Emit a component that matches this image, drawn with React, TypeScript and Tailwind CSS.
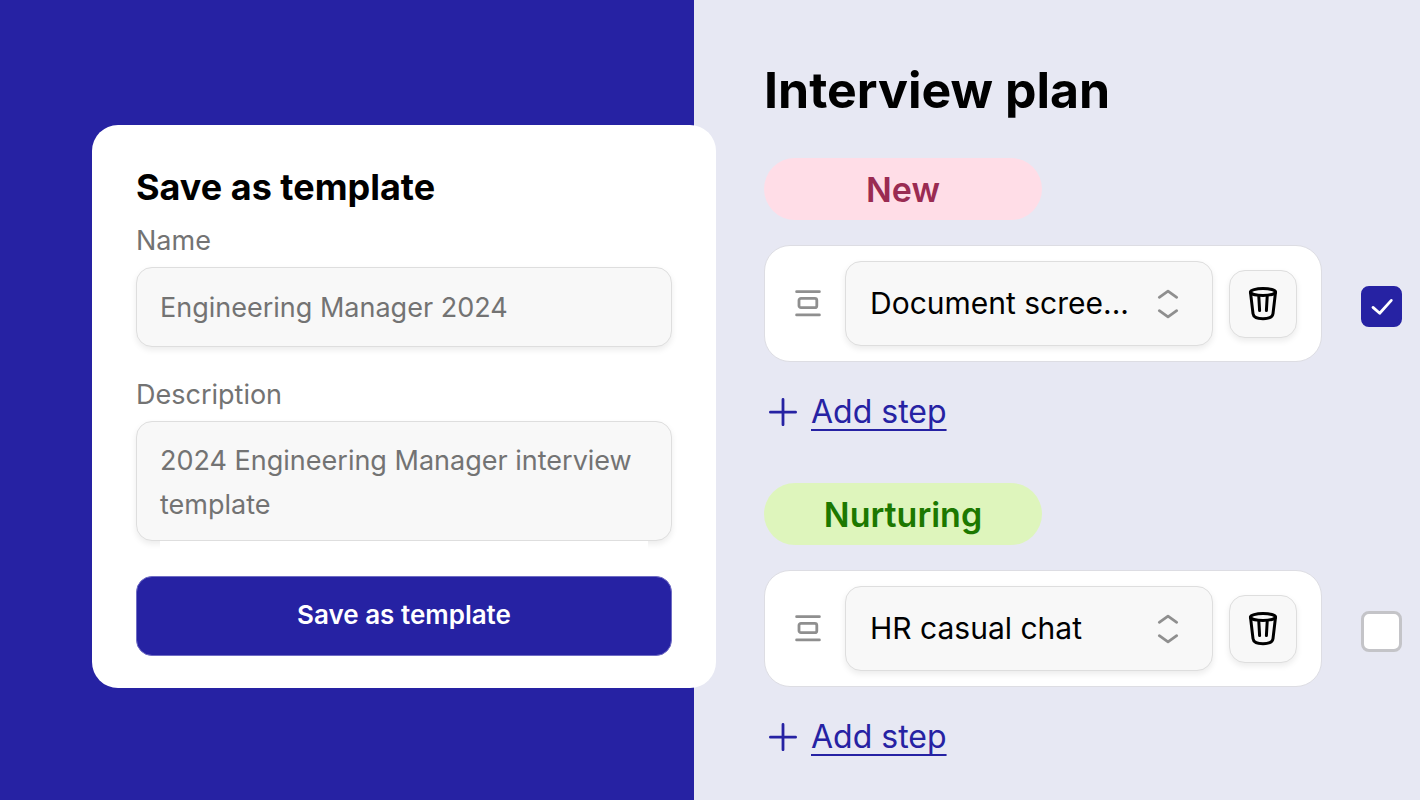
import { useState } from "react";

const steps = [
  {
    id: "new",
    title: "New",
    badge: "bg-[#ffdde7] text-[#9a2b52]",
    step: "Document scree...",
    checked: true,
  },
  {
    id: "nurturing",
    title: "Nurturing",
    badge: "bg-[#def5bc] text-[#1c7800]",
    step: "HR casual chat",
    checked: false,
  },
];

function DragIcon() {
  return (
    <svg
      viewBox="0 0 28 28"
      className="size-7 shrink-0"
      fill="none"
      stroke="#8f8f8f"
      strokeWidth="2.8"
      strokeLinecap="round"
      aria-hidden="true"
    >
      <path d="M2.6 1.7h22.8M2.6 24.9h22.8" />
      <rect x="5" y="8.3" width="17.8" height="9.4" rx="2" />
    </svg>
  );
}

function UpDownIcon() {
  return (
    <svg
      viewBox="0 0 32 32"
      className="size-8"
      fill="none"
      stroke="#8f8f8f"
      strokeWidth="2.8"
      strokeLinecap="round"
      strokeLinejoin="round"
      aria-hidden="true"
    >
      <path d="M7.3 9.3 16 3.2l8.7 6.1M7.3 22.7 16 28.8l8.7-6.1" />
    </svg>
  );
}

function TrashIcon() {
  return (
    <svg
      viewBox="0 0 34 34"
      className="size-[34px]"
      fill="none"
      stroke="#000"
      strokeWidth="3"
      strokeLinecap="round"
      strokeLinejoin="round"
      aria-hidden="true"
    >
      <ellipse cx="17" cy="5" rx="12.6" ry="3.4" />
      <path d="M4.5 5.4 7 26.6c.4 3.2 4.4 5.1 10 5.1s9.6-1.9 10-5.1l2.5-21.2" />
      <path d="M12.8 9.4l.8 14.2M21.2 9.4l-.8 14.2" />
    </svg>
  );
}

function PlusIcon() {
  return (
    <svg
      viewBox="0 0 28 28"
      className="size-7"
      fill="none"
      stroke="currentColor"
      strokeWidth="2.8"
      strokeLinecap="round"
      aria-hidden="true"
    >
      <path d="M14 1.5v25.2M1.4 14.2h25.2" />
    </svg>
  );
}

function TemplateCard() {
  return (
    <form
      className="relative rounded-[26px] bg-white px-11 pt-10 pb-8"
      onSubmit={(e) => e.preventDefault()}
    >
      <h2 className="text-[36px] leading-11 font-bold text-black">
        Save as template
      </h2>
      <label
        htmlFor="name"
        className="mt-2.5 mb-1 block text-[27px] leading-11 text-[#737373]"
      >
        Name
      </label>
      <input
        id="name"
        type="text"
        defaultValue="Engineering Manager 2024"
        className="block h-20 w-full rounded-2xl border border-[#dedede] bg-[#f8f8f8] px-[23px] text-[27px] text-[#737373] shadow-[0_3px_6px_rgba(0,0,0,0.08)] outline-none"
      />
      <label
        htmlFor="description"
        className="mt-[26px] mb-1 block text-[27px] leading-11 text-[#737373]"
      >
        Description
      </label>
      <div className="relative">
        <textarea
          id="description"
          rows={2}
          defaultValue="2024 Engineering Manager interview template"
          className="block h-[120px] w-full resize-none overflow-hidden rounded-2xl border border-[#dedede] bg-[#f8f8f8] px-[23px] py-[17px] text-[27px] leading-11 text-[#737373] shadow-[0_3px_6px_rgba(0,0,0,0.08)] outline-none"
        />
        <div className="absolute inset-x-6 top-full h-3 bg-white" />
      </div>
      <button
        type="submit"
        className="mt-[35px] h-20 w-full rounded-2xl border border-[#6f6cc4] bg-[#2622a3] pb-1 text-[26px] font-semibold text-white"
      >
        Save as template
      </button>
    </form>
  );
}

function Stage({ stage }: { stage: (typeof steps)[number] }) {
  const [checked, setChecked] = useState(stage.checked);
  return (
    <section>
      <h2
        className={`flex h-[62px] w-[278px] items-center justify-center rounded-full text-[34px] font-semibold ${stage.badge}`}
      >
        {stage.title}
      </h2>
      <div className="mt-[25px] flex items-center gap-[39px]">
        <div className="flex min-w-0 flex-1 items-center rounded-[26px] border border-[#dddde3] bg-white py-[15px] pr-6 pl-[29px]">
          <DragIcon />
          <div className="relative ml-[23px] min-w-0 flex-1">
            <select
              aria-label={`${stage.title} step`}
              className="block h-[85px] w-full appearance-none rounded-2xl border border-[#dedede] bg-[#f8f8f8] pr-16 pl-6 text-[30px] text-black shadow-[0_3px_6px_rgba(0,0,0,0.08)] outline-none"
            >
              <option>{stage.step}</option>
            </select>
            <span className="pointer-events-none absolute inset-y-0 right-[29px] flex items-center">
              <UpDownIcon />
            </span>
          </div>
          <button
            type="button"
            aria-label="Delete step"
            className="ml-4 flex size-[68px] shrink-0 items-center justify-center rounded-2xl border border-[#dedede] bg-[#f8f8f8] shadow-[0_3px_6px_rgba(0,0,0,0.08)]"
          >
            <TrashIcon />
          </button>
        </div>
        <label className="relative block shrink-0 pt-1.5">
          <input
            type="checkbox"
            aria-label={`Include ${stage.title}`}
            checked={checked}
            onChange={(e) => setChecked(e.target.checked)}
            className="block size-[41px] appearance-none rounded-lg border-3 border-[#c4c4c8] bg-white checked:border-[#2622a3] checked:bg-[#2622a3]"
          />
          {checked && (
            <svg
              viewBox="0 0 41 41"
              className="pointer-events-none absolute bottom-0 left-0 size-[41px]"
              fill="none"
              stroke="#fff"
              strokeWidth="2.8"
              strokeLinecap="round"
              strokeLinejoin="round"
              aria-hidden="true"
            >
              <path d="M12 21.4l6.7 5.8L30.3 14.4" />
            </svg>
          )}
        </label>
      </div>
      <a
        href="#"
        className="mt-[26px] flex w-fit items-center gap-3.5 pl-[5px] text-[#2622a3]"
      >
        <PlusIcon />
        <span className="text-[32px] leading-12 underline decoration-2 underline-offset-[6px] [text-decoration-skip-ink:none]">
          Add step
        </span>
      </a>
    </section>
  );
}

export default function App() {
  return (
    <main className="grid min-h-screen grid-cols-[694fr_726fr] bg-[#e7e8f3] font-['Inter',sans-serif]">
      <div className="bg-[#2622a3] pt-[125px] pl-[92px]">
        <div className="-mr-[22px]">
          <TemplateCard />
        </div>
      </div>
      <div className="pt-[58px] pr-[18px] pl-[70px]">
        <h1 className="mb-9 text-[50px] leading-16 font-bold text-black">
          Interview plan
        </h1>
        <div className="flex flex-col gap-[47px]">
          {steps.map((stage) => (
            <Stage key={stage.id} stage={stage} />
          ))}
        </div>
      </div>
    </main>
  );
}
